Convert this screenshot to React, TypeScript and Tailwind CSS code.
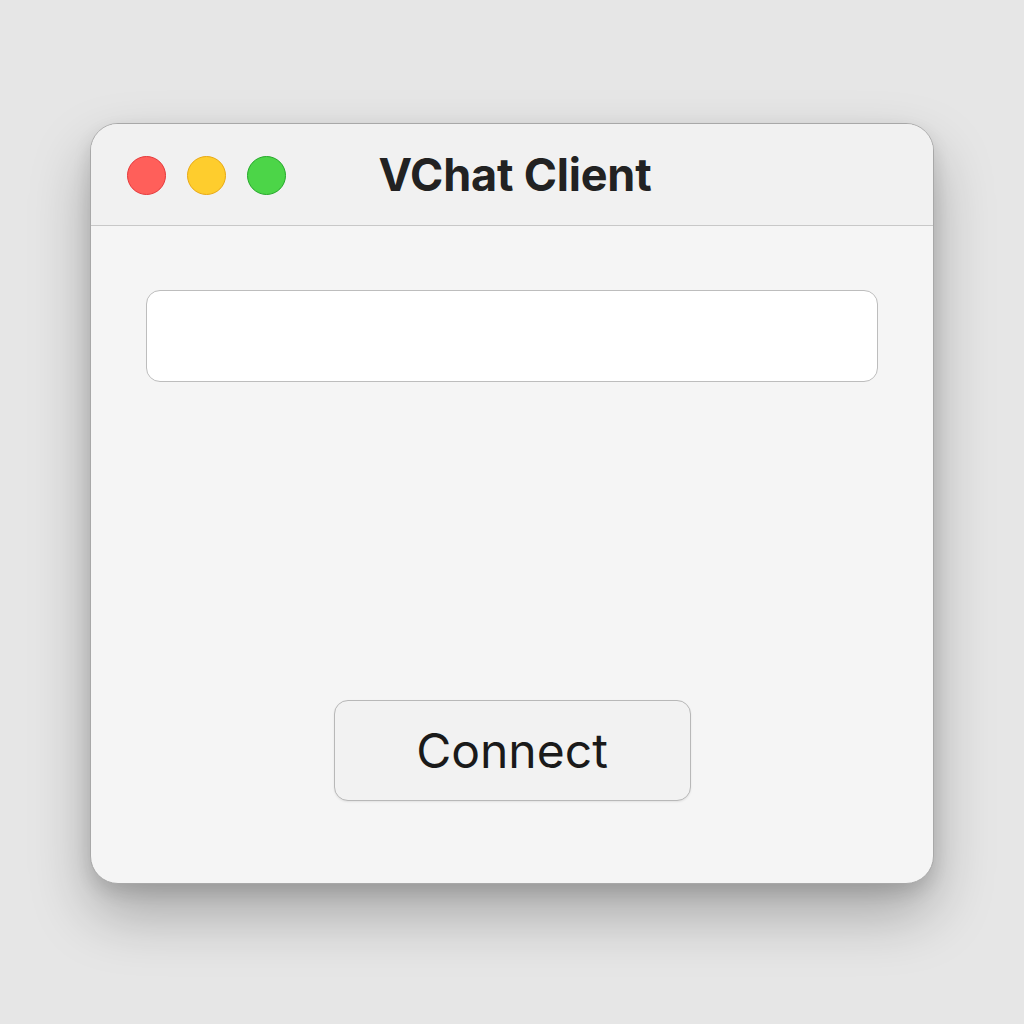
export default function App() {
  return (
    <div className="min-h-screen w-full bg-[#e6e6e6] flex justify-center pt-[123px]" style={{ fontFamily: 'Inter, "Noto Sans", sans-serif' }}>
      {/* Window */}
      <div className="w-[844px] h-[761px] rounded-[28px] bg-[#f5f5f5] border border-[#a8a8a8] shadow-[0_30px_60px_rgba(0,0,0,0.28),0_8px_18px_rgba(0,0,0,0.12)] flex flex-col overflow-hidden">
        {/* Title bar */}
        <div className="relative h-[102px] shrink-0 bg-[#f1f1f1] border-b border-[#c8c8c8] flex items-center justify-center">
          <div className="absolute left-[36px] top-[32px] flex gap-[21px]">
            <span className="w-[39px] h-[39px] rounded-full bg-[#ff5f5a] border border-[#e6383a]" />
            <span className="w-[39px] h-[39px] rounded-full bg-[#fecd2d] border border-[#e9a912]" />
            <span className="w-[39px] h-[39px] rounded-full bg-[#4cd548] border border-[#25a82a]" />
          </div>
          <h1 className="ml-[6px] text-[45px] font-bold tracking-[-0.2px] text-[#222]">VChat Client</h1>
        </div>

        {/* Content */}
        <div className="flex-1 flex flex-col px-[55px] pt-[64px] pb-[82px]">
          <input
            className="h-[92px] w-full rounded-[14px] bg-white border border-[#bdbdbd] outline-none px-4 text-[28px]"
            type="text"
          />
          <div className="flex-1" />
          <div className="flex justify-center">
            <button className="w-[357px] h-[101px] rounded-[14px] bg-[#f2f2f2] border border-[#b8b8b8] shadow-[0_1px_2px_rgba(0,0,0,0.08)] text-[48px] font-normal text-[#1a1a1a]">
              Connect
            </button>
          </div>
        </div>
      </div>
    </div>
  );
}
